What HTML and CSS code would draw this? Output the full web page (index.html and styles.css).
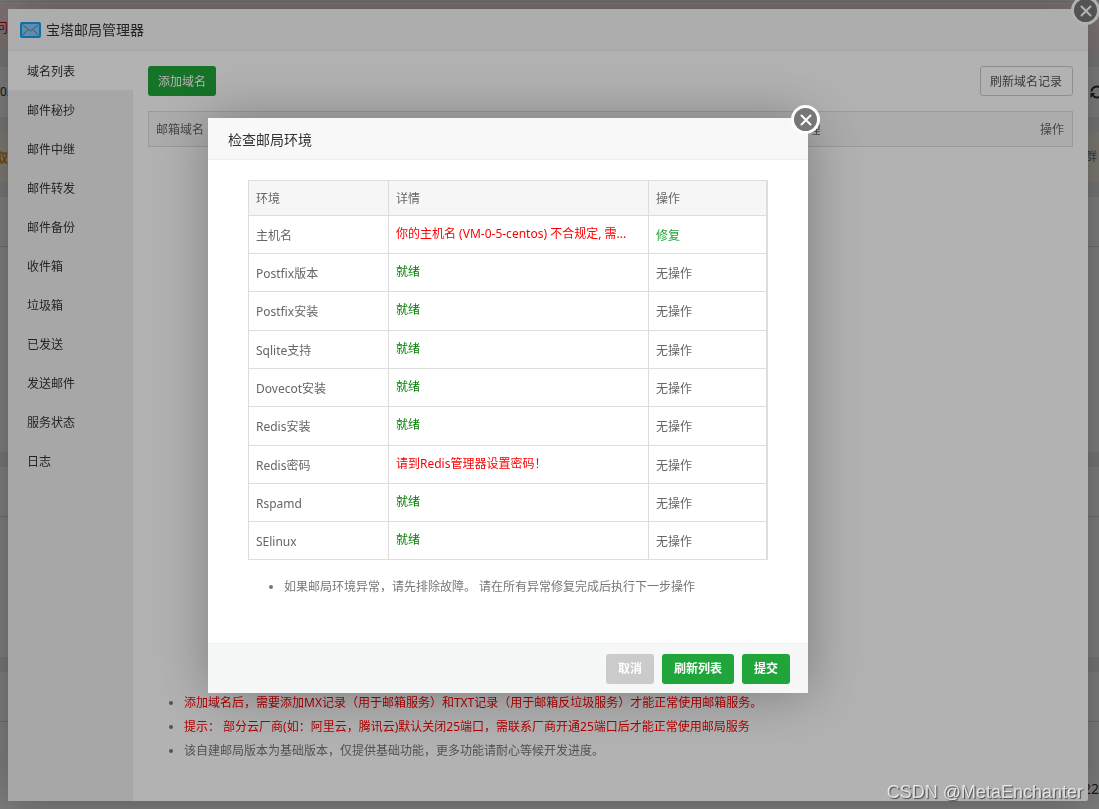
FILE: index.html
```html
<!DOCTYPE html>
<html lang="zh-CN">
<head>
<meta charset="utf-8">
<title>宝塔邮局管理器</title>
<link rel="stylesheet" href="styles.css">
</head>
<body>
<div class="page">
  <div class="band alert"><span class="cut">问</span></div>
  <div class="band bar"><span>0.</span>
    <svg class="refresh" viewBox="0 0 14 14" fill="none" stroke="currentColor" stroke-width="2"><path d="M1.500 6.500A5.500 5.500 0 0 1 11.500 4M12.500 7.500A5.500 5.500 0 0 1 2.500 10"/><path fill="currentColor" stroke="none" d="M13.500 1v5h-5zM.5 13V8h5z"/></svg>
  </div>
  <div class="band notice"><span class="cut bold">取</span><span class="group">群</span></div>
  <div class="panel tall"><div class="panel-head"></div></div>
  <div class="panel mid"><div class="panel-head"></div></div>
  <div class="panel last"><div class="panel-head"></div><p class="count">22</p></div>
</div>

<div class="overlay">
  <section class="window">
    <header class="window-head">
      <svg class="mail" viewBox="0 0 21 16"><rect width="21" height="16" rx="2" fill="#0f9ff5"/><rect x="2" y="2" width="17" height="12" rx="1" fill="#8cc8ee"/><path d="M3 3l7.500 6L18 3M3 13l5-5.500M18 13l-5-5.500" fill="none" stroke="#1c8fd6"/></svg>
      <h1>宝塔邮局管理器</h1>
    </header>
    <button class="close" aria-label="关闭窗口"><svg viewBox="0 0 12 12"><path d="M1.500 1.500l9 9M10.500 1.500l-9 9"/></svg></button>
    <div class="window-body">
      <nav class="side">
        <a class="active" href="#domains">域名列表</a>
        <a href="#bcc">邮件秘抄</a>
        <a href="#relay">邮件中继</a>
        <a href="#forward">邮件转发</a>
        <a href="#backup">邮件备份</a>
        <a href="#inbox">收件箱</a>
        <a href="#trash">垃圾箱</a>
        <a href="#sent">已发送</a>
        <a href="#send">发送邮件</a>
        <a href="#service">服务状态</a>
        <a href="#logs">日志</a>
      </nav>
      <main class="content">
        <div class="toolbar">
          <button class="btn primary">添加域名</button>
          <button class="btn plain">刷新域名记录</button>
        </div>
        <table class="domains">
          <thead><tr><th class="domain">邮箱域名</th><th class="manage">管理</th><th class="action">操作</th></tr></thead>
        </table>
        <ul class="tips bottom">
          <li class="warn">添加域名后，需要添加MX记录（用于邮箱服务）和TXT记录（用于邮箱反垃圾服务）才能正常使用邮箱服务。</li>
          <li class="warn">提示： 部分云厂商(如：阿里云，腾讯云)默认关闭25端口，需联系厂商开通25端口后才能正常使用邮局服务</li>
          <li>该自建邮局版本为基础版本，仅提供基础功能，更多功能请耐心等候开发进度。</li>
        </ul>
      </main>
    </div>
  </section>
</div>

<div class="overlay front">
  <section class="dialog" role="dialog" aria-labelledby="dialog-title">
    <header class="dialog-head"><h2 id="dialog-title">检查邮局环境</h2></header>
    <button class="close" aria-label="关闭"><svg viewBox="0 0 12 12"><path d="M1.500 1.500l9 9M10.500 1.500l-9 9"/></svg></button>
    <div class="dialog-body">
      <table class="env">
        <thead><tr><th class="name">环境</th><th class="detail">详情</th><th>操作</th></tr></thead>
        <tbody>
          <tr><td>主机名</td><td class="bad">你的主机名 (VM-0-5-centos) 不合规定, 需...</td><td><a href="#fix">修复</a></td></tr>
          <tr><td>Postfix版本</td><td class="ok">就绪</td><td>无操作</td></tr>
          <tr><td>Postfix安装</td><td class="ok">就绪</td><td>无操作</td></tr>
          <tr><td>Sqlite支持</td><td class="ok">就绪</td><td>无操作</td></tr>
          <tr><td>Dovecot安装</td><td class="ok">就绪</td><td>无操作</td></tr>
          <tr><td>Redis安装</td><td class="ok">就绪</td><td>无操作</td></tr>
          <tr><td>Redis密码</td><td class="bad">请到Redis管理器设置密码！</td><td>无操作</td></tr>
          <tr><td>Rspamd</td><td class="ok">就绪</td><td>无操作</td></tr>
          <tr><td>SElinux</td><td class="ok">就绪</td><td>无操作</td></tr>
        </tbody>
      </table>
      <ul class="tips">
        <li>如果邮局环境异常，请先排除故障。 请在所有异常修复完成后执行下一步操作</li>
      </ul>
    </div>
    <footer class="dialog-foot">
      <button class="btn muted">取消</button>
      <button class="btn primary">刷新列表</button>
      <button class="btn primary">提交</button>
    </footer>
  </section>
</div>
<div class="watermark">CSDN @MetaEnchanter</div>
</body>
</html>
```
FILE: styles.css
```css
* { box-sizing: border-box; }

body {
  margin: 0;
  overflow: hidden;
  background: #f0f0f0;
  color: #666;
  font: 12px/18px "Noto Sans", "Noto Sans CJK SC", sans-serif;
}

h1, h2, p { margin: 0; font-weight: 400; }
h1, h2 { color: #333; font-size: 14px; line-height: 20px; }
a { text-decoration: none; }
button { font: inherit; cursor: pointer; }

/* page behind the windows */
.page {
  display: flex;
  flex-direction: column;
  gap: 15px;
  height: 100vh;
  padding-top: 1px;
  overflow: hidden;
}
.band {
  display: flex;
  flex: none;
  align-items: center;
  justify-content: space-between;
  height: 50px;
  color: #333;
}
.alert { height: 51px; background: #fce8e8; border-top: 1px solid #ddd; color: #e00; }
.bar { background: #fff; }
.notice { background: #fcf8e8; color: #777; }
.cut { margin-left: -5px; font-size: 13px; }
.bold { color: #e69500; font-weight: 700; }
.group { margin-right: 2px; }
.refresh { width: 14px; height: 14px; margin-right: -5px; }
.panel { flex: none; background: #fff; }
.panel-head { height: 50px; border-bottom: 1px solid #ddd; }
.tall { height: 255px; }
.mid { height: 190px; }
.last { height: 140px; }
.count { padding: 58px 0 0; color: #333; font-size: 14px; text-align: right; }

/* layers */
.overlay {
  position: fixed;
  inset: 0;
  display: flex;
  padding: 9px 11px 8px 8px;
  background: rgba(0, 0, 0, .3);
}
.front {
  align-items: center;
  justify-content: center;
  padding: 2px 83px 0 0;
}
.window, .dialog {
  position: relative;
  display: flex;
  flex-direction: column;
  background: #fff;
  box-shadow: 1px 1px 50px rgba(0, 0, 0, .3);
}
.window { flex: 1; border-radius: 2px; }
.dialog { width: 600px; }

.window-head, .dialog-head {
  display: flex;
  align-items: center;
  height: 42px;
  border-bottom: 1px solid #eee;
  background: #f8f8f8;
}
.window-head { gap: 5px; padding: 0 12px; }
.dialog-head { padding: 2px 20px 0; }
.mail { width: 21px; height: 16px; }

.close {
  position: absolute;
  top: -13px;
  right: -12px;
  display: flex;
  align-items: center;
  justify-content: center;
  width: 29px;
  height: 29px;
  padding: 0;
  border: 3px solid #fff;
  border-radius: 50%;
  background: #777;
}
.close svg { width: 12px; height: 12px; fill: none; stroke: #fff; stroke-width: 2; stroke-linecap: round; }

.window-body { display: flex; flex: 1; }
.side { width: 125px; background: #f0f0f0; }
.side a {
  display: block;
  height: 39px;
  padding: 1px 0 0 19px;
  color: #333;
  line-height: 39px;
}
.side .active { background: #fff; }

.content { display: flex; flex: 1; flex-direction: column; padding: 15px 15px 38px; }
.toolbar { display: flex; justify-content: space-between; margin-bottom: 15px; }

.btn {
  height: 30px;
  padding: 1px 10px 0;
  border: 0;
  border-radius: 3px;
  color: #fff;
}
.toolbar .btn { padding: 2px 10px 0; }
.toolbar .plain { padding: 2px 10px 0 9px; border: 1px solid #ccc; background: #fff; color: #555; }
.primary { background: #20a53a; }
.muted { background: #cbcbcb; }

table { width: 100%; border-collapse: collapse; table-layout: fixed; }
th { height: 35px; background: #f6f6f6; font-weight: 400; text-align: left; }
th, td { padding: 2px 8px 0 7px; }

.domains { border: 1px solid #ddd; }
.domain { width: 300px; }
.domains .manage { width: 380px; text-align: right; }
.domains .action { text-align: right; }

.env th, .env td { border: 1px solid #ddd; }
.env { border-right: 2px solid #ddd; }
.env td { height: 38px; }
.env tr:nth-child(3n):not(:last-child) td { height: 39px; }
.env .name { width: 140px; }
.env .detail { width: 260px; }
.env .ok, .env .bad { padding-bottom: 4px; white-space: nowrap; }
.ok { color: #008000; }
.bad { color: #f00; }
.env a { color: #20a53a; }

.tips { margin: 0; padding-left: 36px; color: #777; line-height: 24px; }
.bottom { margin-top: auto; }
.warn { color: #f00; }
.warn::marker { color: #777; }

.dialog-body { padding: 20px 40px 44px; }
.dialog-body .tips { margin-top: 15px; }
.dialog-foot {
  display: flex;
  align-items: center;
  justify-content: flex-end;
  gap: 8px;
  height: 50px;
  padding: 0 18px;
  border-top: 1px solid #eee;
  background: #f6f8f8;
}
.dialog-foot .btn { padding: 0 12px; font-weight: 700; }

.watermark {
  position: fixed;
  right: 16px;
  bottom: 5px;
  color: rgba(255, 255, 255, .75);
  font: 18px/24px "Liberation Sans", Arial, sans-serif;
  text-shadow: 1px 1px 1px rgba(0, 0, 0, .6);
}
```
